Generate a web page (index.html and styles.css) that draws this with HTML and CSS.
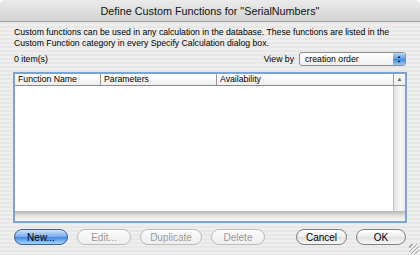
FILE: index.html
```html
<!DOCTYPE html>
<html lang="en">
<head>
    <meta charset="UTF-8">
    <title>Define Custom Functions</title>
    <link rel="stylesheet" href="styles.css">
</head>
<body>
    <div class="window">
        <div class="titlebar">Define Custom Functions for "SerialNumbers"</div>
        <div class="content">
            <p class="desc">Custom functions can be used in any calculation in the database. These functions are listed in the<br>Custom Function category in every Specify Calculation dialog box.</p>
            <div class="toolbar">
                <span>0 item(s)</span>
                <label class="viewby">View by
                    <span class="popup">creation order<span class="arrows">&#9650;<br>&#9660;</span></span>
                </label>
            </div>
            <div class="list">
                <div class="list-head">
                    <div class="col c1">Function Name</div>
                    <div class="col c2">Parameters</div>
                    <div class="col c3">Availability</div>
                    <div class="col up">&#9650;</div>
                </div>
                <div class="list-body">
                    <div class="rows"></div>
                    <div class="vscroll"></div>
                </div>
                <div class="hscroll"></div>
            </div>
            <div class="buttons">
                <button class="btn default">New...</button>
                <button class="btn off edit">Edit...</button>
                <button class="btn off dup">Duplicate</button>
                <button class="btn off del">Delete</button>
                <span class="spacer"></span>
                <button class="btn cancel">Cancel</button>
                <button class="btn ok">OK</button>
            </div>
        </div>
        <div class="grip"></div>
    </div>
</body>
</html>
```
FILE: styles.css
```css
body {
    margin: 0;
    background: #fff;
    font-family: "Liberation Sans", Arial, sans-serif;
    font-size: 8.7px;
    color: #000;
}

.window {
    width: 420px;
    height: 255px;
    position: relative;
    border-radius: 5px 5px 0 0;
    overflow: hidden;
    background: repeating-linear-gradient(#eeeeee 0, #eeeeee 2px, #e7e7e7 2px, #e7e7e7 4px);
}

.titlebar {
    height: 21px;
    line-height: 22px;
    text-align: center;
    font-size: 10.8px;
    background: linear-gradient(#ebebeb, #d3d3d3);
    border-bottom: 1px solid #a2a2a2;
    color: #111;
}

.content {
    padding: 0 13px 0 13px;
}

.desc {
    margin: 5px 0 0 1px;
    line-height: 11px;
    white-space: nowrap;
}

.toolbar {
    display: flex;
    justify-content: space-between;
    align-items: center;
    margin-top: 3px;
    height: 14px;
    padding-left: 1px;
}

.viewby {
    display: flex;
    align-items: center;
    gap: 5px;
    margin-right: 1px;
}

.popup {
    width: 107px;
    height: 14px;
    border: 1px solid #8d8d8d;
    border-radius: 3px;
    background: linear-gradient(#fff, #f1f1f1);
    display: flex;
    align-items: center;
    justify-content: space-between;
    padding-left: 5px;
    box-sizing: border-box;
    overflow: hidden;
}

.arrows {
    width: 12px;
    height: 12px;
    background: linear-gradient(#b9d6f7, #5f9ce4 50%, #3f86dd 51%, #9cc8f5);
    font-size: 4px;
    line-height: 5px;
    text-align: center;
    padding-top: 1px;
    box-sizing: border-box;
}

.list {
    margin-top: 6px;
    height: 151px;
    border: 2px solid #7aa3d6;
    box-sizing: border-box;
    background: #fff;
    display: flex;
    flex-direction: column;
}

.list-head {
    display: flex;
    height: 11px;
    border-bottom: 1px solid #8c8c8c;
    background: linear-gradient(#ffffff, #eeeeee);
    flex-shrink: 0;
}

.col {
    padding-left: 3px;
    line-height: 11px;
    border-right: 1px solid #9a9a9a;
    white-space: nowrap;
    box-sizing: border-box;
}

.c1 { width: 86px; }
.c2 { width: 116px; }
.c3 { flex: 1; }

.up {
    width: 11px;
    border-right: 0;
    font-size: 6px;
    color: #666;
    text-align: center;
    padding: 0;
}

.list-body {
    flex: 1;
    display: flex;
}

.rows {
    flex: 1;
}

.vscroll {
    width: 11px;
    border-left: 1px solid #c4c4c4;
    background: linear-gradient(90deg, #e2e2e2, #f8f8f8 60%, #ebebeb);
}

.hscroll {
    height: 10px;
    flex-shrink: 0;
    background: linear-gradient(#b3b3b3, #e4e4e4 50%, #f7f7f7);
}

.buttons {
    display: flex;
    align-items: center;
    gap: 9px;
    margin-top: 6px;
    padding-left: 1px;
}

.spacer {
    flex: 1;
}

.btn {
    height: 16px;
    border: 1px solid #7e7e7e;
    border-radius: 8px;
    background: linear-gradient(#ffffff, #ececec 50%, #e0e0e0 51%, #f7f7f7);
    font-family: inherit;
    font-size: 10px;
    padding: 0;
    color: #000;
}

.btn.default {
    width: 54px;
    border-color: #3d5f99;
    background: linear-gradient(#cfe3fc, #74a9ec 50%, #3f89e4 51%, #a6d3fc);
}

.btn.off {
    color: #999;
    border-color: #bbb;
    background: linear-gradient(#fbfbfb, #eeeeee);
}

.edit { width: 54px; }
.dup { width: 62px; }
.del { width: 54px; }
.cancel { width: 51px; }
.ok { width: 50px; margin-right: 1px; }

.grip {
    position: absolute;
    right: 1px;
    bottom: 1px;
    width: 10px;
    height: 10px;
    background: repeating-linear-gradient(135deg, transparent 0, transparent 2px, #a0a0a0 2px, #a0a0a0 3px);
}
```
